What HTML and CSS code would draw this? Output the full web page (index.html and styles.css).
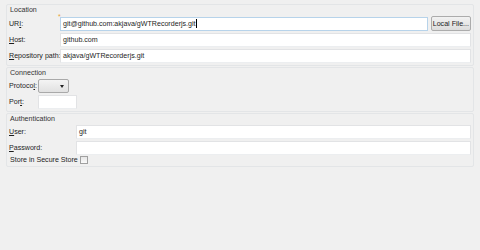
FILE: index.html
```html
<html>
<head>
  <title>Git repository</title>
  <link rel="stylesheet" href="styles.css">
</head>
<body>

  <div class="group">
    <div class="group-title">Location</div>
    <div class="form location">
      <label>UR<u>I</u>:</label>
      <div class="field-wrap">
        <span class="deco">*</span>
        <div class="field focused">git@github.com:akjava/gWTRecorderjs.git<span class="caret"></span></div>
      </div>
      <button class="btn">Local File...</button>

      <label><u>H</u>ost:</label>
      <div class="field wide">github.com</div>

      <label><u>R</u>epository path:</label>
      <div class="field wide">akjava/gWTRecorderjs.git</div>
    </div>
  </div>

  <div class="group">
    <div class="group-title">Connection</div>
    <div class="form connection">
      <label>Protoco<u>l</u>:</label>
      <div class="combo"><span class="arrow"></span></div>

      <label>Por<u>t</u>:</label>
      <div class="field port"></div>
    </div>
  </div>

  <div class="group">
    <div class="group-title">Authentication</div>
    <div class="form auth">
      <label><u>U</u>ser:</label>
      <div class="field">git</div>

      <label><u>P</u>assword:</label>
      <div class="field"></div>
    </div>
    <div class="check-row">
      <span>Store in Secure Store</span>
      <span class="checkbox"></span>
    </div>
  </div>

</body>
</html>
```

FILE: styles.css
```css
body {
  margin: 0;
  padding: 4px 6px;
  background: #f0f0f0;
  font-family: Tahoma, "Liberation Sans", sans-serif;
  font-size: 7.1px;
  color: #1e1e1e;
}

.group {
  border: 1px solid #e3e5e7;
  border-radius: 2px;
  padding: 0 2px 2px 2px;
  margin-bottom: 1px;
}

.group-title {
  height: 10px;
  line-height: 10px;
  padding-left: 1px;
  margin-bottom: 1px;
  color: #333;
}

.form {
  display: grid;
  row-gap: 2px;
  align-items: center;
}

.location {
  grid-template-columns: 51px 1fr auto;
}

.connection {
  grid-template-columns: 29px auto;
  justify-items: start;
}

.auth {
  grid-template-columns: 67px 1fr;
}

label {
  white-space: nowrap;
}

.field {
  height: 12px;
  line-height: 12px;
  background: #fff;
  border: 1px solid #e2e3e5;
  border-bottom-color: #eceef0;
  padding: 0 2px;
  white-space: nowrap;
}

.field.wide {
  grid-column: 2 / 4;
}

.field.focused {
  border-color: #b7d3ea;
}

.field-wrap {
  position: relative;
}

.deco {
  position: absolute;
  left: -2px;
  top: -4px;
  color: #e8a33a;
  font-size: 7px;
}

.caret {
  display: inline-block;
  width: 1px;
  height: 9px;
  background: #000;
  vertical-align: middle;
}

.btn {
  font: inherit;
  height: 15px;
  margin-left: 3px;
  padding: 0 1px;
  border: 1px solid #acacac;
  border-radius: 2px;
  background: linear-gradient(#f2f2f2, #dcdcdc);
  color: #222;
}

.combo {
  width: 29px;
  height: 12px;
  border: 1px solid #a9a9a9;
  border-radius: 2px;
  background: linear-gradient(#f4f4f4, #e1e1e1);
  position: relative;
}

.arrow {
  position: absolute;
  right: 4px;
  top: 5px;
  border-left: 2px solid transparent;
  border-right: 2px solid transparent;
  border-top: 3px solid #222;
}

.port {
  width: 33px;
}

.check-row {
  display: flex;
  align-items: center;
  gap: 2px;
  padding: 1px 0 0 1px;
}

.checkbox {
  width: 6px;
  height: 6px;
  border: 1px solid #a0a0a0;
  background: linear-gradient(#e6e6e6, #fafafa);
}
```
